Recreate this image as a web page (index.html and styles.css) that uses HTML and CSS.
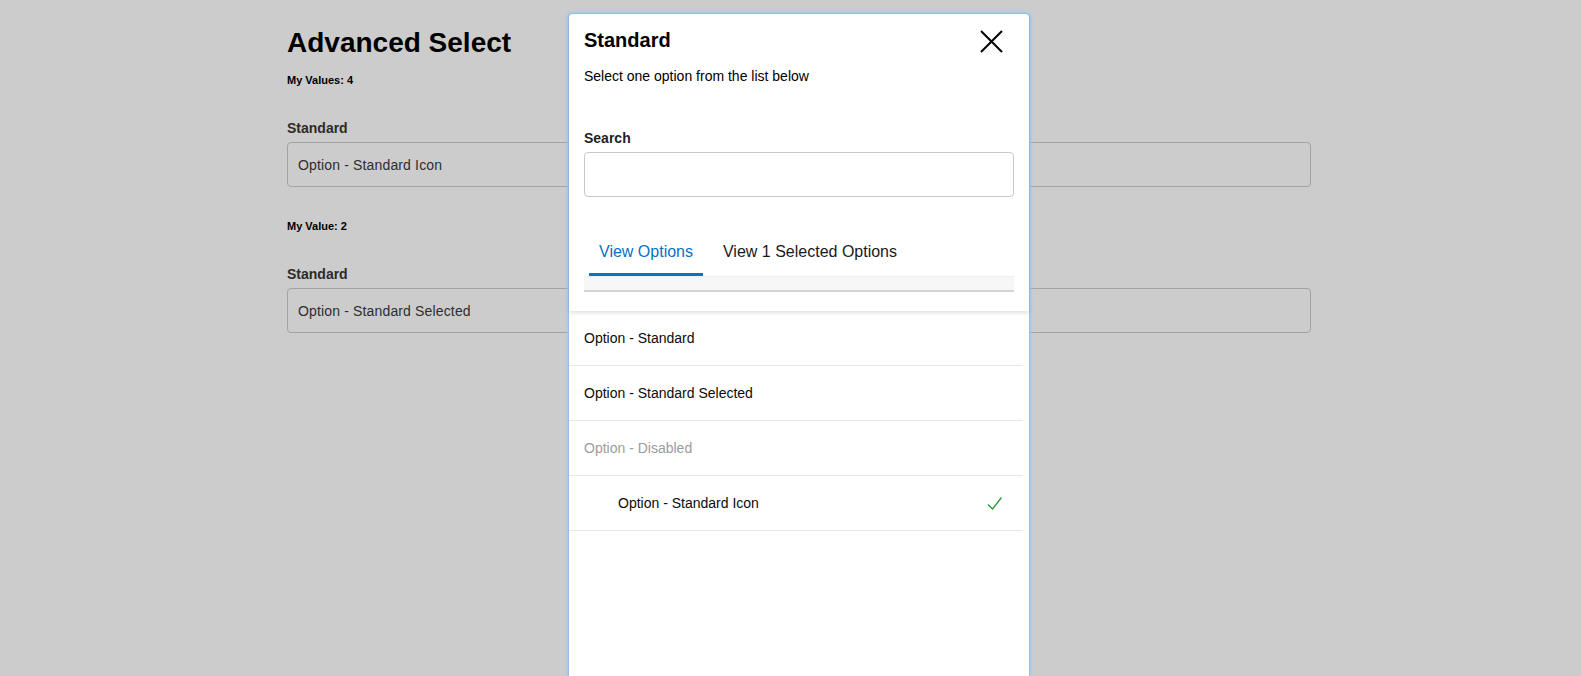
FILE: index.html
```html
<!DOCTYPE html>
<html lang="en">
<head>
<meta charset="utf-8">
<title>Advanced Select</title>
<link rel="stylesheet" href="styles.css">
</head>
<body>
<main class="page">
  <h1 class="page-title">Advanced Select</h1>
  <p class="value-note">My Values: 4</p>
  <div class="field field-one">
    <div class="field-label">Standard</div>
    <div class="select-box">Option - Standard Icon</div>
  </div>
  <p class="value-note value-note-two">My Value: 2</p>
  <div class="field field-two">
    <div class="field-label">Standard</div>
    <div class="select-box">Option - Standard Selected</div>
  </div>
</main>

<section class="modal">
  <header class="modal-header">
    <div class="title-row">
      <h2 class="modal-title">Standard</h2>
      <button class="close-btn" aria-label="Close">
        <svg width="23" height="23" viewBox="0 0 23 23"><path d="M1 1 L22 22 M22 1 L1 22" stroke="#000" stroke-width="2" fill="none"/></svg>
      </button>
    </div>
    <p class="modal-subtitle">Select one option from the list below</p>
    <div class="search-label">Search</div>
    <div class="search-input"></div>
    <nav class="tabs">
      <span class="tab tab-active">View Options</span>
      <span class="tab">View 1 Selected Options</span>
    </nav>
    <div class="tab-band"></div>
  </header>
  <ul class="options">
    <li class="option">Option - Standard</li>
    <li class="option">Option - Standard Selected</li>
    <li class="option option-disabled">Option - Disabled</li>
    <li class="option option-icon">
      <span>Option - Standard Icon</span>
      <svg class="check" width="16" height="15" viewBox="0 0 16 15"><path d="M1 8.5 L5.5 13 L14.5 1.5" stroke="#2a9a3f" stroke-width="1.3" fill="none"/></svg>
    </li>
  </ul>
</section>
</body>
</html>
```

FILE: styles.css
```css
html, body {
  margin: 0;
  padding: 0;
  height: 100%;
  overflow: hidden;
}
body {
  background: #cccccc;
  font-family: "Liberation Sans", Arial, Helvetica, sans-serif;
  color: #000;
  position: relative;
}
.page {
  width: 1024px;
  margin-left: 287px;
  padding-top: 27px;
  display: flex;
  flex-direction: column;
}
.page-title {
  margin: 0;
  font-size: 28px;
  line-height: 32px;
  font-weight: bold;
}
.value-note {
  margin: 14px 0 0;
  font-size: 11px;
  line-height: 14px;
  font-weight: bold;
}
.value-note-two {
  margin-top: 32px;
}
.field {
  margin-top: 31px;
  display: flex;
  flex-direction: column;
  gap: 4px;
}
.field-two {
  margin-top: 31px;
}
.field-label {
  font-size: 14px;
  line-height: 20px;
  font-weight: bold;
  color: #2b2b2b;
}
.select-box {
  height: 45px;
  box-sizing: border-box;
  border: 1px solid #a3a3a3;
  border-radius: 4px;
  padding: 0 10px;
  display: flex;
  align-items: center;
  font-size: 14px;
  letter-spacing: 0.15px;
  color: #2e2e2e;
}

/* Modal */
.modal {
  position: absolute;
  top: 14px;
  left: 569px;
  width: 460px;
  bottom: -20px;
  background: #fff;
  border-radius: 4px 4px 0 0;
  box-shadow: 0 0 0 1px #94c0ea, 0 0 3px 2px #a4c9ec;
  display: flex;
  flex-direction: column;
}
.modal-header {
  padding: 14px 15px 19px;
  display: flex;
  flex-direction: column;
  box-shadow: 0 2px 4px rgba(0, 0, 0, 0.12);
  position: relative;
  z-index: 1;
}
.title-row {
  display: flex;
  justify-content: space-between;
  align-items: flex-start;
}
.modal-title {
  margin: 0;
  font-size: 20px;
  line-height: 24px;
  font-weight: bold;
}
.close-btn {
  border: 0;
  background: none;
  padding: 0;
  margin: 2px 11px 0 0;
  width: 23px;
  height: 23px;
  display: block;
}
.close-btn svg {
  display: block;
}
.modal-subtitle {
  margin: 13px 0 0;
  font-size: 14px;
  line-height: 20px;
}
.search-label {
  margin-top: 42px;
  font-size: 14px;
  line-height: 20px;
  font-weight: bold;
  color: #1f1f1f;
}
.search-input {
  margin-top: 4px;
  height: 45px;
  box-sizing: border-box;
  border: 1px solid #c9c9c9;
  border-radius: 4px;
}
.tabs {
  margin-top: 43px;
  display: flex;
}
.tab {
  margin: 0 5px;
  padding: 0 10px 9px;
  font-size: 16px;
  line-height: 24px;
  color: #1a1a1a;
  border-bottom: 3px solid transparent;
}
.tab-active {
  color: #0a70c6;
  border-bottom-color: #0a74c4;
}
.tab-band {
  height: 16px;
  box-sizing: border-box;
  background: #f7f7f7;
  border-top: 1px solid #efefef;
  border-bottom: 2px solid #d4d4d4;
}
.options {
  list-style: none;
  margin: 0 6px 0 0;
  padding: 0;
}
.option {
  height: 55px;
  box-sizing: border-box;
  border-bottom: 1px solid #e8e8e8;
  padding: 0 20px 0 15px;
  display: flex;
  align-items: center;
  justify-content: space-between;
  font-size: 14px;
  color: #0c0c0c;
}
.option-disabled {
  color: #9c9c9c;
}
.option-icon {
  padding-left: 49px;
}
.check {
  display: block;
}
```
